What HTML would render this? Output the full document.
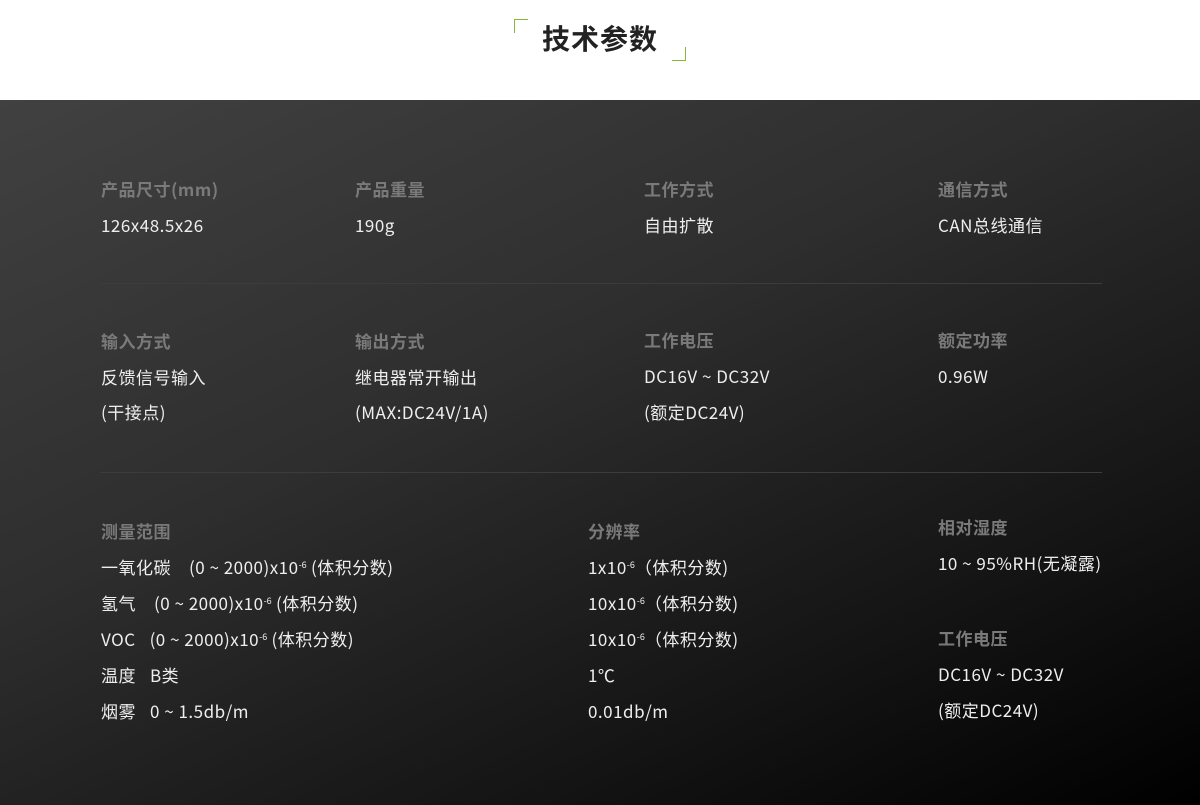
<!DOCTYPE html>
<html><head><meta charset="utf-8"><style>
*{margin:0;padding:0;box-sizing:border-box}
body{width:1200px;height:805px;overflow:hidden;background:#fff;font-family:"Noto Sans CJK SC","Liberation Sans",sans-serif;position:relative}
.title{position:absolute;left:0;width:1200px;top:18px;text-align:center;font-size:28px;font-weight:bold;color:#222;letter-spacing:1px;line-height:40px}
.c1{position:absolute;left:514px;top:19px;width:14px;height:14px;border-left:1px solid #8ab83a;border-top:1px solid #8ab83a}
.c2{position:absolute;left:672px;top:47px;width:14px;height:14px;border-right:1px solid #8ab83a;border-bottom:1px solid #8ab83a}
.dark{position:absolute;left:0;top:100px;width:1200px;height:705px;background:linear-gradient(155deg,#414141 0%,#2e2e2e 40%,#141414 75%,#000 100%)}
.t{position:absolute;font-size:17px;letter-spacing:0.5px;line-height:20px;white-space:nowrap}
.l{color:#7a7a7a;font-weight:bold}
.v{color:#eee}
.hr{position:absolute;left:100px;width:1002px;height:1px;background:#3c3c3c}
sup{font-size:9px;vertical-align:baseline;position:relative;top:-6px;line-height:0;letter-spacing:0}
.g{display:inline-block}
</style></head><body>
<div class="c1"></div><div class="c2"></div>
<div class="title">技术参数</div>
<div class="dark"></div>
<div class="t l" style="left:101px;top:179px">产品尺寸(mm)</div>
<div class="t v" style="left:101px;top:215px">126x48.5x26</div>
<div class="t l" style="left:355px;top:179px">产品重量</div>
<div class="t v" style="left:355px;top:215px">190g</div>
<div class="t l" style="left:644px;top:179px">工作方式</div>
<div class="t v" style="left:644px;top:215px">自由扩散</div>
<div class="t l" style="left:938px;top:179px">通信方式</div>
<div class="t v" style="left:938px;top:215px">CAN总线通信</div>
<div class="hr" style="top:283px"></div>
<div class="t l" style="left:101px;top:331px">输入方式</div>
<div class="t v" style="left:101px;top:367px">反馈信号输入</div>
<div class="t v" style="left:101px;top:402px">(干接点)</div>
<div class="t l" style="left:355px;top:331px">输出方式</div>
<div class="t v" style="left:355px;top:367px">继电器常开输出</div>
<div class="t v" style="left:355px;top:402px">(MAX:DC24V/1A)</div>
<div class="t l" style="left:644px;top:330px">工作电压</div>
<div class="t v" style="left:644px;top:366px">DC16V ~ DC32V</div>
<div class="t v" style="left:644px;top:402px">(额定DC24V)</div>
<div class="t l" style="left:938px;top:330px">额定功率</div>
<div class="t v" style="left:938px;top:366px">0.96W</div>
<div class="hr" style="top:472px"></div>
<div class="t l" style="left:101px;top:521px">测量范围</div>
<div class="t v" style="left:101px;top:557px">一氧化碳<span class="g" style="width:18px"></span>(0 ~ 2000)x10<sup>-6</sup> (体积分数)</div>
<div class="t v" style="left:101px;top:593px">氢气<span class="g" style="width:18px"></span>(0 ~ 2000)x10<sup>-6</sup> (体积分数)</div>
<div class="t v" style="left:101px;top:629px">VOC<span class="g" style="width:14px"></span>(0 ~ 2000)x10<sup>-6</sup> (体积分数)</div>
<div class="t v" style="left:101px;top:665px">温度<span class="g" style="width:14px"></span>B类</div>
<div class="t v" style="left:101px;top:701px">烟雾<span class="g" style="width:14px"></span>0 ~ 1.5db/m</div>
<div class="t l" style="left:588px;top:521px">分辨率</div>
<div class="t v" style="left:588px;top:557px">1x10<sup>-6</sup>（体积分数)</div>
<div class="t v" style="left:588px;top:593px">10x10<sup>-6</sup>（体积分数)</div>
<div class="t v" style="left:588px;top:629px">10x10<sup>-6</sup>（体积分数)</div>
<div class="t v" style="left:588px;top:665px">1℃</div>
<div class="t v" style="left:588px;top:701px">0.01db/m</div>
<div class="t l" style="left:938px;top:517px">相对湿度</div>
<div class="t v" style="left:938px;top:553px">10 ~ 95%RH(无凝露)</div>
<div class="t l" style="left:938px;top:628px">工作电压</div>
<div class="t v" style="left:938px;top:664px">DC16V ~ DC32V</div>
<div class="t v" style="left:938px;top:700px">(额定DC24V)</div>
</body></html>
